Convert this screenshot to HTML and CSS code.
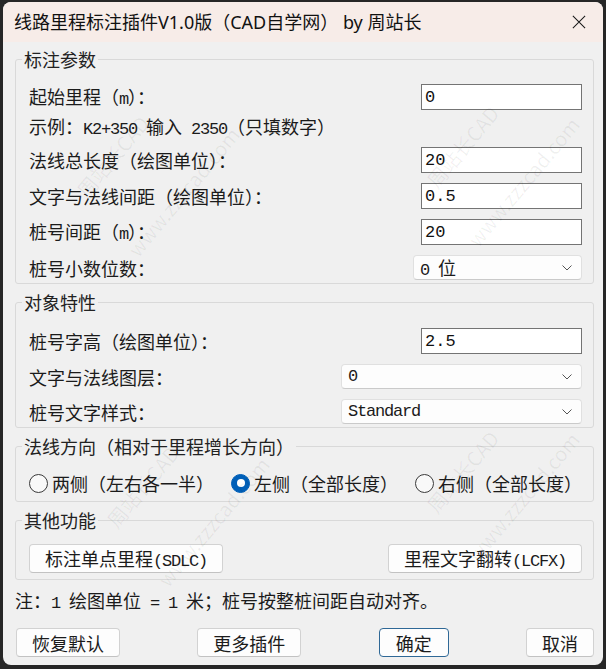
FILE: index.html
```html
<!DOCTYPE html>
<html lang="zh-CN">
<head>
	<meta charset="utf-8">
	<title>线路里程标注插件</title>
	<link rel="stylesheet" href="styles.css">
</head>
<body>
<div class="window">
	<div class="titlebar">
		<span class="title">线路里程标注插件V1.0版（CAD自学网） by 周站长</span>
		<svg class="close" viewBox="0 0 16 16"><path d="M1 1L15 15M15 1L1 15" stroke="#1a1a1a" stroke-width="1.2" fill="none"/></svg>
	</div>

	<div class="content">
		<fieldset class="group params">
			<legend>标注参数</legend>
			<div class="body">
				<div class="row"><span>起始里程（<span class="m">m</span>）：</span><input class="edit" type="text" value="0"></div>
				<div class="hint">示例：<span class="m">K2+350 </span>输入<span class="m"> 2350</span>（只填数字）</div>
				<div class="row"><span>法线总长度（绘图单位）：</span><input class="edit" type="text" value="20"></div>
				<div class="row"><span>文字与法线间距（绘图单位）：</span><input class="edit" type="text" value="0.5"></div>
				<div class="row"><span>桩号间距（<span class="m">m</span>）：</span><input class="edit" type="text" value="20"></div>
				<div class="row"><span>桩号小数位数：</span>
					<div class="combo narrow"><span><span class="m">0 </span>位</span><svg class="chev" viewBox="0 0 10 6"><path d="M0.5 0.5L5 5L9.5 0.5" stroke="#555" fill="none"/></svg></div>
				</div>
			</div>
		</fieldset>

		<fieldset class="group props">
			<legend>对象特性</legend>
			<div class="body">
				<div class="row"><span>桩号字高（绘图单位）：</span><input class="edit" type="text" value="2.5"></div>
				<div class="row"><span>文字与法线图层：</span>
					<div class="combo wide"><span class="m">0</span><svg class="chev" viewBox="0 0 10 6"><path d="M0.5 0.5L5 5L9.5 0.5" stroke="#555" fill="none"/></svg></div>
				</div>
				<div class="row"><span>桩号文字样式：</span>
					<div class="combo wide"><span class="m">Standard</span><svg class="chev" viewBox="0 0 10 6"><path d="M0.5 0.5L5 5L9.5 0.5" stroke="#555" fill="none"/></svg></div>
				</div>
			</div>
		</fieldset>

		<fieldset class="group dir">
			<legend>法线方向（相对于里程增长方向）</legend>
			<div class="body radios">
				<label class="radio"><span class="dot"></span>两侧（左右各一半）</label>
				<label class="radio"><span class="dot on"></span>左侧（全部长度）</label>
				<label class="radio"><span class="dot"></span>右侧（全部长度）</label>
			</div>
		</fieldset>

		<fieldset class="group tools">
			<legend>其他功能</legend>
			<div class="body buttons">
				<button class="btn tool">标注单点里程<span class="m">(SDLC)</span></button>
				<button class="btn tool">里程文字翻转<span class="m">(LCFX)</span></button>
			</div>
		</fieldset>

		<div class="note">注：<span class="m">1 </span>绘图单位<span class="m"> = 1 </span>米；桩号按整桩间距自动对齐。</div>

		<div class="actions">
			<button class="btn w104">恢复默认</button>
			<button class="btn w104">更多插件</button>
			<button class="btn default w70">确定</button>
			<button class="btn w68">取消</button>
		</div>
	</div>

	<!-- watermark -->
	<div class="watermark">
		<span style="left:60px;top:140px">周站长CAD</span>
		<span style="left:100px;top:175px">www.zzzcad.com</span>
		<span style="left:410px;top:130px">周站长CAD</span>
		<span style="left:440px;top:165px">www.zzzcad.com</span>
		<span style="left:90px;top:470px">周站长CAD</span>
		<span style="left:130px;top:505px">www.zzzcad.com</span>
		<span style="left:410px;top:455px">周站长CAD</span>
		<span style="left:440px;top:480px">www.zzzcad.com</span>
	</div>
</div>
</body>
</html>
```

FILE: styles.css
```css
* { box-sizing: border-box; }
html, body { margin: 0; }
body { background: #262626; font: 18px/20px "Noto Sans CJK SC", sans-serif; color: #1b1b1b; }
.m { font-family: "Liberation Mono", monospace; font-size: 17px; letter-spacing: -1.2px; line-height: 1; }

.window { position: relative; width: 600px; height: 663px; margin: 2px 0 0 3px; border-radius: 8px; overflow: hidden; background: #f0f0f0; }

.titlebar { display: flex; align-items: center; height: 40px; padding: 0 17px 0 11px; background: #f7ece8; }
.title { flex: 1; font: 18px/24px "Noto Sans", "Noto Sans CJK SC", sans-serif; color: #111; }
.close { width: 14px; height: 14px; }

.content { padding: 7px 9px 0 12px; }

.group { margin: 0 0 8px; padding: 0; border: 1px solid #d9d9d9; border-radius: 3px; min-width: 0; }
.group legend { margin-left: 6px; padding: 0 2px; height: 20px; line-height: 20px; color: #222; }
.group .body { padding: 15px 11px 3px 13px; }
.props .body { padding-top: 16px; }
.dir .body { padding-bottom: 6px; }
.tools .body { padding: 14px 11px 6px 13px; }

.row { display: flex; align-items: center; justify-content: space-between; }
.row + .row { margin-top: 10px; }
.hint { height: 20px; margin: 6px 0 11px; }

.edit { width: 161px; height: 26px; margin: 0; padding: 0 3px; border: 1px solid #747474; background: #fff; font: 17px "Liberation Mono", monospace; color: #111; outline: none; }

.combo { display: flex; align-items: center; justify-content: space-between; height: 25px; padding: 0 9px 0 6px; border: 1px solid #e0e0e0; border-bottom-color: #cacaca; border-radius: 4px; background: #fdfdfd; }
.combo.narrow { width: 169px; }
.combo.wide { width: 241px; }
.chev { width: 10px; height: 6px; }

.radios { display: flex; align-items: center; gap: 17px; height: 45px; padding-left: 12px; }
.radio { display: flex; align-items: center; gap: 4px; }
.dot { display: flex; align-items: center; justify-content: center; width: 19px; height: 19px; border: 1px solid #3a3a3a; border-radius: 50%; background: #f9f9f9; }
.dot.on { border-color: #005fb8; background: #005fb8; }
.dot.on::after { content: ""; width: 8px; height: 8px; border-radius: 50%; background: #fff; }

.btn { height: 29px; margin: 0; padding: 0; border: 1px solid #d2d2d2; border-bottom-color: #c2c2c2; border-radius: 4px; background: #fdfdfd; font: 18px/20px "Noto Sans CJK SC", sans-serif; color: #1b1b1b; }
.btn.default { border-color: #2f6896; }
.buttons { display: flex; justify-content: space-between; }
.tool { width: 194px; }

.note { height: 20px; margin-top: 10px; }

.actions { display: flex; justify-content: space-between; margin-top: 18px; padding-left: 1px; }
.w104 { width: 104px; }
.w70 { width: 70px; }
.w68 { width: 68px; }

.watermark { position: absolute; inset: 0; pointer-events: none; }
.watermark span { position: absolute; transform: rotate(-50deg); font: 20px "Noto Sans CJK SC", sans-serif; color: rgba(0, 0, 0, 0.06); white-space: nowrap; }
```
